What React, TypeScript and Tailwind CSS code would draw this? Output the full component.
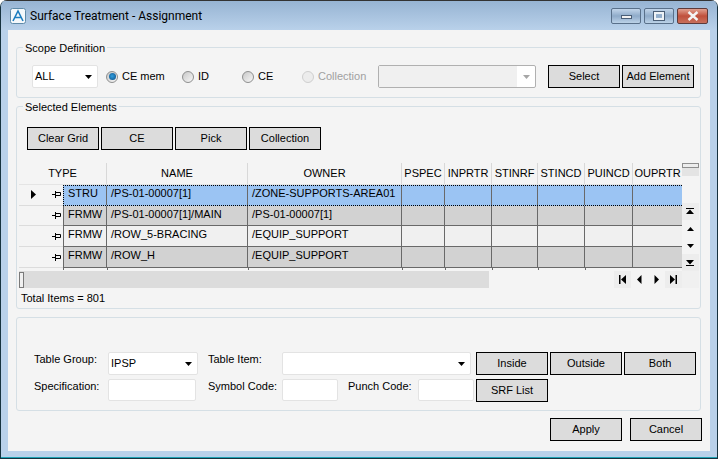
import React from "react";

const cols = [
  { name: "NAME", w: "w-[141px]" },
  { name: "OWNER", w: "w-[154px]" },
  { name: "PSPEC", w: "w-[43px]" },
  { name: "INPRTR", w: "w-[47px]" },
  { name: "STINRF", w: "w-[46px]" },
  { name: "STINCD", w: "w-[47px]" },
  { name: "PUINCD", w: "w-[48px]" },
  { name: "OUPRTR", w: "w-[49px]" },
];

const rows = [
  { type: "STRU", name: "/PS-01-00007[1]", owner: "/ZONE-SUPPORTS-AREA01", bg: "bg-[#9bc4f3]", selected: true },
  { type: "FRMW", name: "/PS-01-00007[1]/MAIN", owner: "/PS-01-00007[1]", bg: "bg-[#d2d2d2]" },
  { type: "FRMW", name: "/ROW_5-BRACING", owner: "/EQUIP_SUPPORT", bg: "bg-[#f0f0f0]" },
  { type: "FRMW", name: "/ROW_H", owner: "/EQUIP_SUPPORT", bg: "bg-[#d2d2d2]" },
];

function Btn({ label, className = "" }: { label: string; className?: string }) {
  return (
    <button className={`w-[72px] h-[23px] shrink-0 border border-black bg-[#dcdcdc] text-[11px] leading-[19px] text-black ${className}`}>
      {label}
    </button>
  );
}

function Caret({ disabled, up }: { disabled?: boolean; up?: boolean }) {
  return (
    <svg width="7" height="4" viewBox="0 0 7 4" className="shrink-0">
      <path d={up ? "M0 4h7L3.5 0z" : "M0 0h7L3.5 4z"} fill={disabled ? "#a6a6a6" : "#000"} />
    </svg>
  );
}

function Combo({ value, className = "" }: { value?: string; className?: string }) {
  return (
    <div className={`h-[23px] shrink-0 flex items-center justify-between bg-white border border-[#e3e3e3] rounded-[2px] pl-[2px] pr-[5px] ${className}`}>
      <span className="text-[11px] leading-[13px]">{value}</span>
      <Caret />
    </div>
  );
}

function Radio({ label, checked, disabled, className = "" }: { label: string; checked?: boolean; disabled?: boolean; className?: string }) {
  return (
    <div className={`flex items-center gap-[4px] ${className}`}>
      <span
        className={`w-[12px] h-[12px] rounded-full border flex items-center justify-center ${
          disabled ? "border-[#cfcfcf] bg-[#ececec]" : "border-[#8e8f8f] bg-gradient-to-br from-[#c8c8c8] to-[#f8f8f8]"
        }`}
      >
        {checked && <span className="w-[7px] h-[7px] rounded-full bg-[radial-gradient(circle_at_45%_45%,#2f9fe0,#0d4a80)]" />}
      </span>
      <span className={`text-[11px] leading-[13px] ${disabled ? "text-[#a0a0a0]" : "text-black"}`}>{label}</span>
    </div>
  );
}

function Pin() {
  return (
    <svg width="9" height="7" viewBox="0 0 9 7" className="shrink-0">
      <path d="M0 3.5h3M3.5 0v7M3.5 1.5h5v3h-5" stroke="#000" strokeWidth="1" fill="none" />
    </svg>
  );
}

function Nav({ d, shaded }: { d: string; shaded?: boolean }) {
  return (
    <div className={`w-[17px] h-[17px] flex items-center justify-center ${shaded ? "bg-[#ededed]" : ""}`}>
      <svg width="9" height="9" viewBox="0 0 9 9">
        <path d={d} fill="#000" />
      </svg>
    </div>
  );
}

function Grid() {
  return (
    <div className="flex ml-[2px] w-[680px] h-[125px]">
      <div className="w-[663px] shrink-0 flex flex-col">
        <div className="flex h-[22px] border-b border-[#e4e4e4] text-[11px] text-black">
          <div className="w-[88px] border-r border-[#d8d8d8] text-center leading-[20px]">TYPE</div>
          {cols.map((c) => (
            <div key={c.name} className={`${c.w} border-r border-[#d8d8d8] text-center leading-[20px] overflow-hidden whitespace-nowrap last:border-r-0`}>
              {c.name}
            </div>
          ))}
        </div>
        {rows.map((r, i) => (
          <div key={i} className="flex h-[21px]">
            <div className="w-[44px] shrink-0 flex items-center justify-between pl-[12px] pr-[2px] border-b border-[#dcdcdc]">
              {r.selected ? (
                <svg width="5" height="9" viewBox="0 0 5 9" className="shrink-0">
                  <path d="M0 0l5 4.5L0 9z" fill="#000" />
                </svg>
              ) : (
                <span />
              )}
              <Pin />
            </div>
            <div
              className={`flex flex-1 border-b border-l border-[#696969] text-[11px] text-black ${r.bg} ${
                r.selected ? "border-t border-t-black border-b-black border-l-black border-dotted leading-[15px]" : "leading-[17px]"
              }`}
            >
              <div className="w-[43px] border-r border-solid border-[#696969] pl-[4px]">{r.type}</div>
              <div className="w-[141px] border-r border-solid border-[#696969] pl-[4px]">{r.name}</div>
              <div className="w-[154px] border-r border-solid border-[#696969] pl-[4px] whitespace-nowrap">{r.owner}</div>
              <div className="w-[43px] border-r border-solid border-[#696969]" />
              <div className="w-[47px] border-r border-solid border-[#696969]" />
              <div className="w-[46px] border-r border-solid border-[#696969]" />
              <div className="w-[47px] border-r border-solid border-[#696969]" />
              <div className="w-[48px] border-r border-solid border-[#696969]" />
              <div className="flex-1" />
            </div>
          </div>
        ))}
        <div className="flex h-[2px] pl-[44px]">
          {["w-[44px]", "w-[141px]", "w-[154px]", "w-[43px]", "w-[47px]", "w-[46px]", "w-[47px]", "w-[48px]"].map((w, i) => (
            <div key={i} className={`${w} border-l border-[#696969]`} />
          ))}
        </div>
        <div className="flex h-[17px] mt-[1px]">
          <div className="w-[470px] bg-[#dcdcdc]">
            <div className="w-[5px] h-[16px] mt-[1px] border border-[#7a7a7a] bg-[#f0f0f0]" />
          </div>
          <div className="flex ml-[125px]">
            <Nav shaded d="M1 0h1.5v9H1zM8 0v9L3 4.5z" />
            <Nav d="M6.5 0v9L2 4.5z" />
            <Nav d="M2.5 0v9L7 4.5z" />
            <Nav shaded d="M6.5 0H8v9H6.5zM1 0v9l5-4.5z" />
          </div>
        </div>
      </div>
      <div className="w-[17px] shrink-0 flex flex-col">
        <div className="h-[13px] bg-[#e4e4e4]">
          <div className="h-[5px] border border-[#8e8e8e] bg-[#ededed]" />
        </div>
        <div className="h-[27px]" />
        <Nav shaded d="M0 1h8v1H0zM4 2.5L8 7H0z" />
        <div className="h-[17px] flex items-center justify-center">
          <Caret up />
        </div>
        <div className="h-[17px] flex items-center justify-center">
          <Caret />
        </div>
        <Nav shaded d="M0 7h8v1H0zM4 6.5L8 2H0z" />
        <div className="h-[17px] bg-[#f0f0f0]" />
      </div>
    </div>
  );
}

export default function App() {
  return (
    <div className="w-[718px] h-[459px] overflow-hidden bg-[#b9d1ea] border-x border-b border-[#16323f] rounded-t-[7px] flex flex-col font-['Liberation_Sans',Arial,sans-serif]">
      {/* title bar */}
      <div className="h-[30px] shrink-0 border-t border-[#333] flex items-center pl-[9px] pr-[9px] bg-gradient-to-b from-[#97b4d3] to-[#b9d1ea]">
        <svg width="16" height="16" viewBox="0 0 16 16" className="shrink-0">
          <rect x="0.5" y="0.5" width="15" height="15" rx="2" fill="#f4f8fb" stroke="#5f8aa8" />
          <path d="M3 13L8 3l5 10M5 9.5h6" stroke="#1f7fc0" strokeWidth="1.6" fill="none" />
        </svg>
        <span className="ml-[4px] text-[12px] text-black font-['Roboto',sans-serif]">Surface Treatment - Assignment</span>
        <div className="ml-auto flex gap-[3px]">
          <div className="w-[30px] h-[16px] rounded-[2px] border border-[#59708a] bg-gradient-to-b from-[#c2d5ea] via-[#8fabc9] to-[#bcd2e8] flex items-center justify-center">
            <span className="w-[11px] h-[4px] mt-[3px] bg-[#f2f2f2] border border-[#4b5f77]" />
          </div>
          <div className="w-[30px] h-[16px] rounded-[2px] border border-[#59708a] bg-gradient-to-b from-[#c2d5ea] via-[#8fabc9] to-[#bcd2e8] flex items-center justify-center">
            <span className="w-[10px] h-[8px] border-2 border-[#eef2f6] outline outline-1 outline-[#4b5f77] flex" />
          </div>
          <div className="w-[31px] h-[16px] rounded-[2px] border border-[#5d3a3a] bg-gradient-to-b from-[#e0a090] via-[#c0503c] to-[#c8705c] flex items-center justify-center">
            <svg width="12" height="10" viewBox="0 0 12 10">
              <path d="M1.5 1l9 8M10.5 1l-9 8" stroke="#f4f4f4" strokeWidth="2.4" />
            </svg>
          </div>
        </div>
      </div>

      {/* client area */}
      <div className="mx-[7px] h-[421px] shrink-0 bg-[#f4f4f4] px-[8px] pt-[11px] text-[11px] text-black">
        <fieldset className="h-[57px] mr-[1px] border border-[#d5dfe5] rounded-[3px]">
          <legend className="ml-[6px] px-[2px] leading-[15px] h-[13px]">Scope Definition</legend>
          <div className="flex items-center mt-[11px] ml-[15px]">
            <Combo value="ALL" className="w-[66px]" />
            <Radio label="CE mem" checked className="ml-[8px] w-[76px]" />
            <Radio label="ID" className="w-[60px]" />
            <Radio label="CE" className="w-[60px]" />
            <Radio label="Collection" disabled className="w-[76px]" />
            <div className="w-[158px] h-[23px] shrink-0 flex items-stretch bg-white border border-[#b0b0b0] rounded-[2px]">
              <div className="flex-1 bg-[#f0f0f0]" />
              <div className="w-[18px] flex items-center justify-center">
                <Caret disabled />
              </div>
            </div>
            <Btn label="Select" className="ml-[12px]" />
            <Btn label="Add Element" className="ml-[2px]" />
          </div>
        </fieldset>

        <fieldset className="mt-[2px] h-[209px] mr-[1px] border border-[#d5dfe5] rounded-[3px]">
          <legend className="ml-[6px] px-[2px] leading-[15px] h-[13px]">Selected Elements</legend>
          <div className="flex gap-[2px] mt-[14px] ml-[10px]">
            <Btn label="Clear Grid" />
            <Btn label="CE" />
            <Btn label="Pick" />
            <Btn label="Collection" />
          </div>
          <div className="mt-[13px]">
            <Grid />
          </div>
          <div className="mt-[4px] ml-[4px] leading-[13px]">Total Items = 801</div>
        </fieldset>

        <div className="mt-[8px] h-[94px] mr-[1px] border border-[#d5dfe5] rounded-[3px] pl-[17px] pt-[34px]">
          <div className="flex">
            <div className="w-[74px] pt-[1px] leading-[13px]">Table Group:</div>
            <Combo value="IPSP" className="w-[90px]" />
            <div className="w-[74px] ml-[10px] pt-[1px] leading-[13px]">Table Item:</div>
            <Combo className="w-[189px]" />
            <Btn label="Inside" className="ml-[5px]" />
            <Btn label="Outside" className="ml-[2px]" />
            <Btn label="Both" className="ml-[2px]" />
          </div>
          <div className="flex mt-[4px]">
            <div className="w-[74px] pt-[1px] leading-[13px]">Specification:</div>
            <div className="w-[88px] h-[22px] bg-white border border-[#e3e3e3] rounded-[2px]" />
            <div className="w-[74px] ml-[12px] pt-[1px] leading-[13px]">Symbol Code:</div>
            <div className="w-[56px] h-[22px] bg-white border border-[#e3e3e3] rounded-[2px]" />
            <div className="w-[70px] ml-[10px] pt-[1px] leading-[13px]">Punch Code:</div>
            <div className="w-[56px] h-[22px] bg-white border border-[#e3e3e3] rounded-[2px]" />
            <Btn label="SRF List" className="ml-[2px]" />
          </div>
        </div>

        <div className="flex justify-end gap-[8px] mt-[7px]">
          <Btn label="Apply" />
          <Btn label="Cancel" />
        </div>
      </div>
      <div className="mt-auto h-px bg-[#1fa3b5]" />
    </div>
  );
}
